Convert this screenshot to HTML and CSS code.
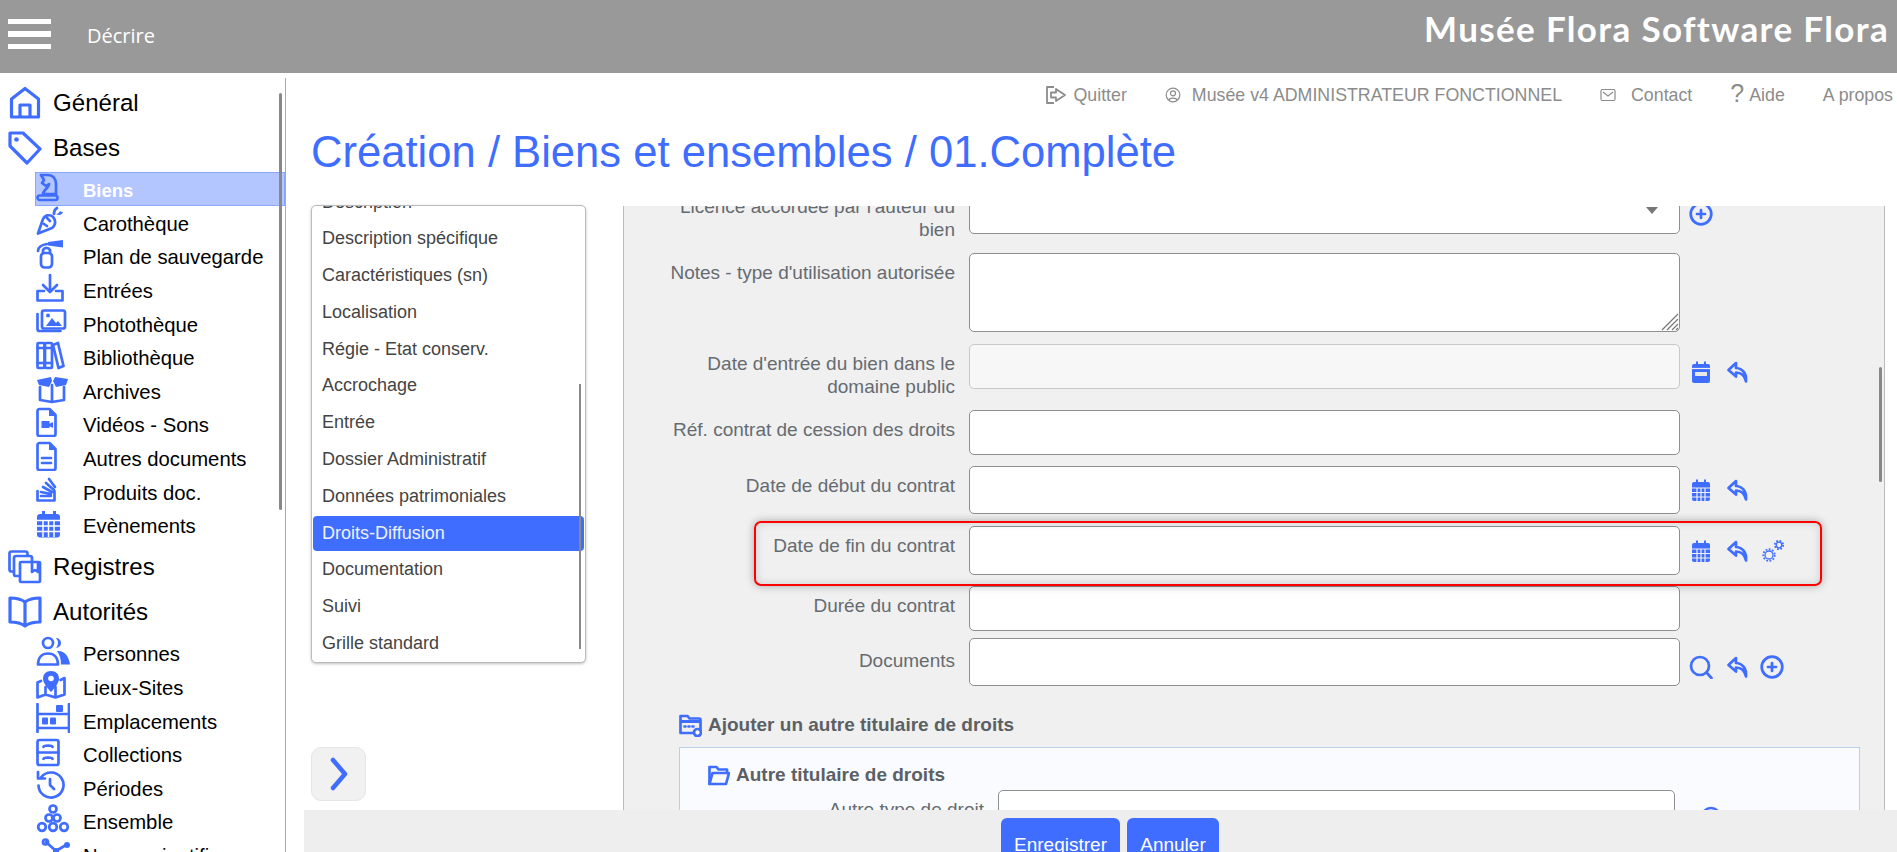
FILE: index.html
```html
<!DOCTYPE html>
<html lang="fr">
<head>
<meta charset="utf-8">
<title>Création / Biens et ensembles / 01.Complète</title>
<link rel="stylesheet" href="styles.css">
</head>
<body>
<svg class="defs" width="0" height="0" aria-hidden="true">
  <symbol id="i-reply" viewBox="0 0 24 24"><path class="s" d="M11 3 3.500 10 11 16.500V12.500c5 0 8.500 2.500 10 9 .8-8-3.500-13-10-13.500z"/></symbol>
  <symbol id="i-plus" viewBox="0 0 24 24"><circle class="s" cx="12" cy="12" r="10.300"/><path class="s" d="M12 8v8M8 12h8"/></symbol>
  <symbol id="i-search" viewBox="0 0 24 24"><circle class="s" cx="11" cy="11" r="9"/><path class="s" d="m17.500 17.500 5 5.500"/></symbol>
  <symbol id="i-cal" viewBox="0 0 24 24"><rect class="f" x="3" y="4" width="18" height="19" rx="2"/><path class="f" d="M7 1.500h2v4H7zM15 1.500h2v4h-2z"/><path class="g" d="M3 10h18M3 14.500h18M3 19h18M8 10v13M12 10v13M16 10v13"/></symbol>
  <symbol id="i-cald" viewBox="0 0 24 24"><rect class="f" x="3" y="4" width="18" height="19" rx="2"/><path class="f" d="M7 1.500h2v4H7zM15 1.500h2v4h-2z"/><path class="g" d="M3 8.500h18"/><rect class="lt" x="6" y="12" width="12" height="4"/></symbol>
</svg>
<div class="app">
  <header class="topbar">
    <div class="burger"><span></span><span></span><span></span></div>
    <div class="section-name">Décrire</div>
    <div class="brand">Musée Flora Software Flora</div>
  </header>
  <div class="main">
    <aside class="side">
      <div class="side-scroll"></div>
      <div class="big first"><svg class="bi" viewBox="0 0 34 34"><path class="s3" d="M3.500 13 17 2.500 30.500 13v18h-27zM12 31V19h10v12"/></svg><span>Général</span></div>
      <div class="big"><svg class="bi" viewBox="0 0 34 34"><path class="s3" d="M2 2h13l17 16-13 14L2 15z"/><circle class="f" cx="8.500" cy="8.500" r="2.300"/></svg><span>Bases</span></div>
      <div class="sub active"><svg class="ni" viewBox="0 0 34 30"><path class="s" d="M5 3h7c5 0 8 4 8 9v10H7c0-4 6-6 6-10l-3 2-4-3 2-3z"/><rect class="s" x="1.500" y="23.500" width="20" height="4.500" rx="2.200"/><circle class="f" cx="8" cy="8" r="1"/></svg><span>Biens</span></div>
      <div class="sub"><svg class="ni" viewBox="0 0 34 30"><path class="s" d="M2 27.500 7 13c2-4 7-5 10-2s3 8-1 11zM8 18l3 2M11 12l3 3"/><path class="s" d="M18 8c0-3 1-5 3-6"/><path class="f" d="M20 8c3 2 6 1 7-2-1 0-2 0-3-1-1 2-2 3-4 3z"/></svg><span>Carothèque</span></div>
      <div class="sub"><svg class="ni" viewBox="0 0 34 30"><rect class="s" x="5" y="14" width="11" height="14.500" rx="3.500"/><path class="s" d="M7 14v-3a4 4 0 0 1 7 0v3M2 12c0-3 3-6 9-7"/><path class="f" d="m12 3 15-2v7.500L12 6.500z"/></svg><span>Plan de sauvegarde</span></div>
      <div class="sub"><svg class="ni" viewBox="0 0 34 30"><path class="s" d="M14 2v17M7 12l7 7 7-7"/><path class="s" d="M8 18H1.500v9.500h25V18H20"/></svg><span>Entrées</span></div>
      <div class="sub"><svg class="ni" viewBox="0 0 34 30"><rect class="s" x="6" y="4.500" width="23" height="18" rx="2"/><path class="f" d="m10 20 6-8 4 5 2-2 4 5z"/><circle class="f" cx="12" cy="9.500" r="2"/><path class="s" d="M1.500 8v15a2 2 0 0 0 2 2h21"/></svg><span>Photothèque</span></div>
      <div class="sub"><svg class="ni" viewBox="0 0 34 30"><rect class="s" x="1.500" y="3" width="7" height="25" rx="1"/><rect class="s" x="9" y="3" width="7" height="25" rx="1"/><path class="s" d="m17 5 5-2 5.500 23-5 2z"/><path class="s" d="M1.500 8h14M1.500 23h14"/></svg><span>Bibliothèque</span></div>
      <div class="sub"><svg class="ni" viewBox="0 0 34 30"><path class="f" d="m1 6 14-3 1 4-3 6-10-2zM32 5l-13-2-2 4 3 6 10-2z"/><path class="s" d="M4 13v13l12 2 12-2V13M16 11v16"/></svg><span>Archives</span></div>
      <div class="sub"><svg class="ni" viewBox="0 0 34 30"><path class="s" d="M1.500 4a2 2 0 0 1 2-2h10l6 6v19a2 2 0 0 1-2 2h-14a2 2 0 0 1-2-2z"/><path class="f" d="m13 2 7 7h-7zM5.500 14h8v7h-8zM13 17l4-2v6l-4-2z"/></svg><span>Vidéos - Sons</span></div>
      <div class="sub"><svg class="ni" viewBox="0 0 34 30"><path class="s" d="M1.500 4a2 2 0 0 1 2-2h10l6 6v19a2 2 0 0 1-2 2h-14a2 2 0 0 1-2-2z"/><path class="f" d="m13 2 7 7h-7z"/><path class="s" d="M6 17h9M6 22h9"/></svg><span>Autres documents</span></div>
      <div class="sub"><svg class="ni" viewBox="0 0 34 30"><path class="s" d="M1.500 17v9.500h17V17M5 22h10M5 18l10 2M7 13l9 5M10 9l8 7M13 5l6 8"/></svg><span>Produits doc.</span></div>
      <div class="sub"><svg class="ni" viewBox="0 0 34 30"><rect class="f" x="1" y="6" width="23" height="23.500" rx="3"/><path class="f" d="M6 3h3v5H6zM17 3h3v5h-3z"/><path class="w" d="M1 12.500h23M1 18h23M1 23.500h23M7 12.500V29M12.500 12.500V29M18 12.500V29"/></svg><span>Evènements</span></div>
      <div class="big after"><svg class="bi" viewBox="0 0 34 34"><rect class="s" x="1.500" y="1.500" width="18" height="20" rx="2"/><rect class="s wf" x="6" y="6" width="18" height="20" rx="2"/><rect class="s wf" x="12" y="12" width="20" height="20" rx="1"/><path class="s" d="M24 13v9l3-2 3 2V13"/></svg><span>Registres</span></div>
      <div class="big"><svg class="bi" viewBox="0 0 34 34"><path class="s3" d="M2 3c5 0 11 1 15 4 4-3 10-4 15-4v24c-5 0-11 1-15 4-4-3-10-4-15-4zM17 7v24"/></svg><span>Autorités</span></div>
      <div class="sub gap"><svg class="ni" viewBox="0 0 34 30"><circle class="s" cx="12" cy="7" r="5"/><path class="f" d="M20 2a5 5 0 0 1 0 10 8 8 0 0 0 0-10z"/><path class="s" d="M2 28.500c0-7 4-11 10-11s10 4 10 11z"/><path class="f" d="M21 15c7-1 12 5 13 13.500h-9c0-5-1-9-4-13.500z"/></svg><span>Personnes</span></div>
      <div class="sub"><svg class="ni" viewBox="0 0 34 30"><path class="s" d="M5 11 1.500 12.500v15l8-3 10 3 9-3V8l-4 2M9.500 17v8M19.500 17v10"/><path class="f" d="M15 1c-5 0-8 3-8 8 0 4 5 10 8 13 3-3 8-9 8-13 0-5-3-8-8-8z"/><circle class="wfill" cx="15" cy="8.500" r="2.800"/></svg><span>Lieux-Sites</span></div>
      <div class="sub"><svg class="ni" viewBox="0 0 34 30"><path class="s" d="M1.500 1v28M33 1v28M1.500 11h31.500M1.500 25h31.500"/><rect class="f" x="20" y="2" width="7" height="7" rx="1"/><rect class="f" x="6" y="14.500" width="6" height="7" rx="1"/><rect class="f" x="14" y="14.500" width="6" height="7" rx="1"/></svg><span>Emplacements</span></div>
      <div class="sub"><svg class="ni" viewBox="0 0 34 30"><rect class="s" x="1.500" y="3" width="21" height="25" rx="2"/><path class="s" d="M1.500 15.500h21M7.500 10c0-2 9-2 9 0M7.500 22c0-2 9-2 9 0"/></svg><span>Collections</span></div>
      <div class="sub"><svg class="ni" viewBox="0 0 34 30"><path class="s" d="M5 7.500a12.500 12.500 0 1 1-2.500 8M2 2v6.500h7M14 9v6l4 4"/></svg><span>Périodes</span></div>
      <div class="sub"><svg class="ni" viewBox="0 0 34 30"><g class="s2"><circle cx="17" cy="5" r="3.500"/><circle cx="13" cy="14" r="3.500"/><circle cx="21" cy="14" r="3.500"/><circle cx="6" cy="23" r="3.800"/><circle cx="17" cy="23" r="3.800"/><circle cx="28" cy="23" r="3.800"/></g></svg><span>Ensemble</span></div>
      <div class="sub"><svg class="ni" viewBox="0 0 34 30"><path class="s" d="m10 4 10 9 10-6M20 13v10"/><circle class="s" cx="9.500" cy="4" r="2.500"/><circle class="f" cx="20" cy="13" r="3"/><circle class="f" cx="31" cy="7" r="3"/></svg><span>Noms scientifiques</span></div>
    </aside>
    <main class="content">
      <nav class="links">
        <a class="lk q"><svg class="li" viewBox="0 0 23 20"><path class="sg" d="M9 2H2v16h7M11 4l9 6-9 6v-3.500H6v-5h5z"/></svg>Quitter</a>
        <a class="lk u"><svg class="lu" viewBox="0 0 16 16"><circle class="sg1" cx="8" cy="8" r="6.800"/><circle class="sg1" cx="8" cy="6.300" r="2.500"/><path class="sg1" d="M3.800 13c.7-2.600 7.700-2.600 8.400 0"/></svg>Musée v4 ADMINISTRATEUR FONCTIONNEL</a>
        <a class="lk c"><svg class="lu" viewBox="0 0 16 14"><rect class="sg1" x="1" y="1.500" width="14" height="11" rx="1.500"/><path class="sg1" d="m3 4 5 4 5-4"/></svg>Contact</a>
        <a class="lk h"><span class="qm">?</span>Aide</a>
        <a class="lk">A propos</a>
      </nav>
      <h1 class="title">Création / Biens et ensembles / 01.Complète</h1>
      <div class="cols">
        <div class="left">
          <div class="tabs">
            <div class="tabs-scroll"></div>
            <ul class="tab-list">
              <li>Description</li>
              <li>Description spécifique</li>
              <li>Caractéristiques (sn)</li>
              <li>Localisation</li>
              <li>Régie - Etat conserv.</li>
              <li>Accrochage</li>
              <li>Entrée</li>
              <li>Dossier Administratif</li>
              <li>Données patrimoniales</li>
              <li class="on">Droits-Diffusion</li>
              <li>Documentation</li>
              <li>Suivi</li>
              <li>Grille standard</li>
            </ul>
          </div>
          <button class="next" type="button" aria-label="Suivant"><svg viewBox="0 0 20 34"><path d="m4 3 12 14L4 31" /></svg></button>
        </div>
        <section class="form">
          <div class="form-scroll"></div>
          <div class="form-inner">
            <div class="field r1">
              <label class="lab">Licence accordée par l'auteur du bien</label>
              <div class="ctl"><select class="box"></select><span class="caret"></span></div>
              <div class="acts"><svg class="ic"><use href="#i-plus"/></svg></div>
            </div>
            <div class="field r2">
              <label class="lab">Notes - type d'utilisation autorisée</label>
              <div class="ctl"><textarea class="box"></textarea><svg class="grip" viewBox="0 0 18 18"><path d="M17 1 1 17M17 6 6 17M17 11l-6 6M17 15l-2 2"/></svg></div>
            </div>
            <div class="field r3">
              <label class="lab">Date d'entrée du bien dans le domaine public</label>
              <div class="ctl"><input class="box" disabled></div>
              <div class="acts"><svg class="ic"><use href="#i-cald"/></svg><svg class="ic"><use href="#i-reply"/></svg></div>
            </div>
            <div class="field r4">
              <label class="lab">Réf. contrat de cession des droits</label>
              <div class="ctl"><input class="box"></div>
            </div>
            <div class="field r5">
              <label class="lab">Date de début du contrat</label>
              <div class="ctl"><input class="box"></div>
              <div class="acts"><svg class="ic"><use href="#i-cal"/></svg><svg class="ic"><use href="#i-reply"/></svg></div>
            </div>
            <div class="field r6">
              <label class="lab">Date de fin du contrat</label>
              <div class="ctl"><input class="box"></div>
              <div class="acts"><svg class="ic"><use href="#i-cal"/></svg><svg class="ic"><use href="#i-reply"/></svg>
                <svg class="ic" viewBox="0 0 24 24"><circle class="gear" cx="9" cy="16" r="4"/><circle class="gt" cx="9" cy="16" r="5.800"/><circle class="gear" cx="19" cy="6" r="2.800"/><circle class="gt" cx="19" cy="6" r="4.200"/></svg></div>
            </div>
            <div class="field r7">
              <label class="lab">Durée du contrat</label>
              <div class="ctl"><input class="box"></div>
            </div>
            <div class="field r8">
              <label class="lab">Documents</label>
              <div class="ctl"><input class="box"></div>
              <div class="acts"><svg class="ic"><use href="#i-search"/></svg><svg class="ic"><use href="#i-reply"/></svg><svg class="ic"><use href="#i-plus"/></svg></div>
            </div>
            <h3 class="add"><svg class="fo" viewBox="0 0 23 24"><path class="s" d="M1.500 20V3h7l2 2.500H20a1.500 1.500 0 0 1 1.500 1.500v13z"/><path class="f" d="M1.500 7h20v3h-20z"/><path class="s" d="M5.500 13.500h1M9.500 13.500h1M13.500 13.500h1"/><circle class="s wf" cx="18.500" cy="19.500" r="3.500"/></svg>Ajouter un autre titulaire de droits</h3>
            <div class="sub-panel">
              <h4 class="sub-title"><svg class="fo2" viewBox="0 0 22 22"><path class="s" d="M1.500 20V3h7l2 2.500H19V9"/><path class="s" d="M1.500 20 4.500 9h16.500l-3 11z"/></svg>Autre titulaire de droits</h4>
              <div class="field sub-field">
                <label class="lab">Autre type de droit</label>
                <div class="ctl"><input class="box"></div>
                <div class="acts"><svg class="ic"><use href="#i-search"/></svg></div>
              </div>
            </div>
          </div>
        </section>
      </div>
    </main>
  </div>
  <footer class="foot">
    <button class="btn save" type="button">Enregistrer</button>
    <button class="btn cancel" type="button">Annuler</button>
  </footer>
</div>
</body>
</html>
```

FILE: styles.css
```css
* { box-sizing: border-box; }
html, body { margin: 0; height: 100%; overflow: hidden; background: #fff; }
body { font-family: "Liberation Sans", Arial, sans-serif; color: #000; }
.defs { position: absolute; }
.app { position: relative; height: 852px; width: 1897px; display: flex; flex-direction: column; overflow: hidden; }

.s, .s2 circle, .s3 { fill: none; stroke: #3f6dff; stroke-width: 2.700; stroke-linejoin: round; stroke-linecap: round; }
.s3 { stroke-width: 3.200; }
.s2 circle { stroke-width: 2.700; }
.f { fill: #3f6dff; }
.w { fill: none; stroke: #fff; stroke-width: 1.500; }
.g { fill: none; stroke: #f0f0f0; stroke-width: 1.200; }
.lt { fill: #e8e8e8; }
.wf { fill: #fff; }
.wfill { fill: #fff; }
.sg { fill: none; stroke: #8c8c8c; stroke-width: 1.800; stroke-linejoin: round; }
.sg1 { fill: none; stroke: #8c8c8c; stroke-width: 1.200; }

.topbar { height: 73px; flex: none; background: #999; display: flex; align-items: center; color: #fff; }
.burger { width: 43px; margin-left: 8px; display: flex; flex-direction: column; gap: 7px; margin-top: -5px; }
.burger span { height: 5.500px; background: #fff; display: block; }
.section-name { margin-left: 36px; font-family: "Open Sans", sans-serif; font-size: 20px; margin-top: -3px; }
.brand { margin-left: auto; margin-right: 8px; margin-top: -17px; font-family: Lato, sans-serif; font-weight: 700; font-size: 35px; letter-spacing: 1.350px; white-space: nowrap; }

.main { flex: 1; display: flex; min-height: 0; }
.side { position: relative; width: 286px; flex: none; margin-top: 5px; padding-top: 2.500px; border-right: 1px solid #aaa; overflow: hidden; }
.side-scroll { position: absolute; left: 279px; top: 15px; width: 3px; height: 417px; background: #888; border-radius: 2px; }
.big { height: 45px; display: flex; align-items: center; padding-left: 8px; font-size: 24.100px; }
.big .bi { width: 34px; height: 34px; flex: none; margin-right: 11px; margin-top: -1px; }
.big span { margin-top: 0; }
.big.after { margin-top: 3px; }
.sub { height: 33.600px; display: flex; align-items: flex-start; margin-left: 35px; padding-left: 1px; font-size: 20.300px; white-space: nowrap; }
.sub.gap { margin-top: 2px; }
.sub .ni { width: 34px; height: 30px; flex: none; margin-right: 13px; }
.sub span { line-height: 28px; margin-top: 4.300px; }
.big + .sub { margin-top: 1.500px; }
.sub.active { background: #b3c6ff; box-shadow: inset 0 0 0 1px #8aa6ff; color: #fff; font-weight: 700; font-size: 18.500px; }
.sub.active span { margin-top: 5px; }

.content { flex: 1; min-width: 0; position: relative; }
.links { height: 44px; display: flex; justify-content: flex-end; align-items: center; padding-right: 4px; gap: 38px; color: #8c8c8c; font-size: 17.800px; }
.lk { display: flex; align-items: center; white-space: nowrap; }
.li { width: 23px; height: 20px; margin-right: 5px; }
.lu { width: 16px; height: 16px; }
.lk.u .lu { margin-right: 11px; }
.lk.c .lu { margin-right: 15px; }
.qm { font-size: 25px; line-height: 20px; font-weight: 300; margin-right: 5px; margin-top: -4px; }
.title { margin: 10px 0 28px 25px; height: 50px; font-size: 43.600px; line-height: 50px; font-weight: 400; color: #3f6dff; white-space: nowrap; }
.cols { display: flex; align-items: flex-start; height: 700px; }
.left { width: 275px; margin-left: 25px; flex: none; }
.tabs { position: relative; height: 458px; border: 1px solid #bbb; border-radius: 5px; box-shadow: 0 1px 3px rgba(0, 0, 0, .25); overflow: hidden; background: #fff; }
.tabs-scroll { position: absolute; z-index: 2; left: 267px; top: 178px; width: 2px; height: 265px; background: #888; }
.tab-list { list-style: none; margin: -23.300px 0 0; padding: 0; font-size: 18px; color: #444; }
.tab-list li { height: 35px; margin: 1.800px 1px 0; line-height: 35px; padding-left: 9px; border-radius: 4px; white-space: nowrap; }
.tab-list li.on { background: #3f6dff; color: #eef2ff; }
.next { display: block; width: 55px; height: 54px; margin-top: 84px; padding: 0; background: #f1f1f1; border: 1px solid #e6e6e6; border-radius: 10px; }
.next svg { display: block; width: 20px; height: 34px; margin: 0 auto; }
.next path { fill: none; stroke: #3f6dff; stroke-width: 4.500; stroke-linecap: round; stroke-linejoin: round; }

.form { position: relative; width: 1262px; margin-left: 37px; margin-top: 1px; height: 700px; background: #f0f0f0; border-left: 1px solid #bbb; border-right: 1px solid #bbb; overflow: hidden; }
.form-scroll { position: absolute; left: 1255px; top: 161px; width: 3px; height: 115px; background: #888; border-radius: 2px; }
.form-inner { margin-top: -36px; }
.field { position: relative; display: grid; grid-template-columns: 331px 711px auto; grid-template-rows: minmax(0, 1fr); column-gap: 14px; }
.lab { display: block; text-align: right; font-size: 19px; line-height: 23px; color: #666b70; padding: 8px 0 0 35px; }
.ctl { position: relative; height: 100%; min-height: 0; }
.box { display: block; width: 100%; height: 100%; margin: 0; background: #fff; border: 1px solid #8f8f8f; border-top-width: 1.500px; border-radius: 5px; resize: none; appearance: none; outline: none; }
.box:disabled { background: #f7f7f7; border-color: #c8c8c8; }
.caret { position: absolute; right: 22px; top: 37px; width: 0; height: 0; border-left: 6px solid transparent; border-right: 6px solid transparent; border-top: 7px solid #777; }
.grip { position: absolute; right: 1px; bottom: 1px; width: 18px; height: 18px; }
.grip path { fill: none; stroke: #777; stroke-width: 1.200; }
.acts { display: flex; gap: 11.500px; margin-left: -5px; }
.ic { width: 24px; height: 24px; flex: none; }
.r1 { height: 64px; }
.r1 .lab { padding-top: 25px; }
.r1 .acts { padding-top: 32px; }
.r2 { height: 79px; margin-top: 19px; }
.r2 .lab { padding-top: 7.500px; }
.r3 { height: 45px; margin-top: 12px; }
.r3 .lab { padding-top: 8px; }
.r3 .acts { padding-top: 16px; }
.r4 { height: 45px; margin-top: 21px; }
.r5 { height: 48px; margin-top: 11px; }
.r5 .acts { padding-top: 12px; }
.r6 { height: 49px; margin-top: 12px; }
.r6 .acts { padding-top: 13px; }
.r6::before { content: ""; position: absolute; z-index: 2; left: 130px; top: -5px; width: 1064px; height: 61px; border: 2px solid #f00; border-radius: 7px; box-shadow: 0 0 8px rgba(0, 0, 0, .3), inset 0 0 8px rgba(0, 0, 0, .15); pointer-events: none; }
.gear { fill: none; stroke: #3f6dff; stroke-width: 1.300; }
.gt { fill: none; stroke: #3f6dff; stroke-width: 1.700; stroke-dasharray: 1.800 1.500; }
.r7 { height: 45px; margin-top: 11px; }
.r8 { height: 48px; margin-top: 7px; }
.r8 .lab { padding-top: 11px; }
.r8 .acts { padding-top: 17px; }
.add { display: flex; align-items: center; margin: 27px 0 0 55px; height: 24px; font-size: 19px; color: #5b6065; font-weight: 700; white-space: nowrap; }
.fo { width: 23px; height: 24px; margin-right: 6px; }
.sub-panel { margin: 10px 0 0 55px; width: 1181px; height: 200px; background: #f9fbff; border: 1px solid #b8d0e8; padding-top: 15px; }
.sub-title { display: flex; align-items: center; margin: 0 0 3px 28px; height: 24px; font-size: 19px; color: #5b6065; font-weight: 700; white-space: nowrap; }
.fo2 { width: 22px; height: 22px; margin-right: 6px; }
.sub-field { height: 48px; grid-template-columns: 304px 676.500px auto; }
.sub-field .acts { margin-left: 11px; padding-top: 16px; }

.foot { position: absolute; left: 304px; right: 0; top: 809.500px; bottom: 0; background: #eee; display: flex; align-items: flex-start; gap: 7px; padding: 8.500px 0 0 697px; overflow: hidden; }
.btn { height: 50px; border: 0; border-radius: 6px; background: #3f6dff; color: #fff; font-family: "Liberation Sans", Arial, sans-serif; font-size: 19px; padding: 3px 0 0; display: block; line-height: 22px; vertical-align: top; }
.save { width: 119px; }
.cancel { width: 92px; }
```
